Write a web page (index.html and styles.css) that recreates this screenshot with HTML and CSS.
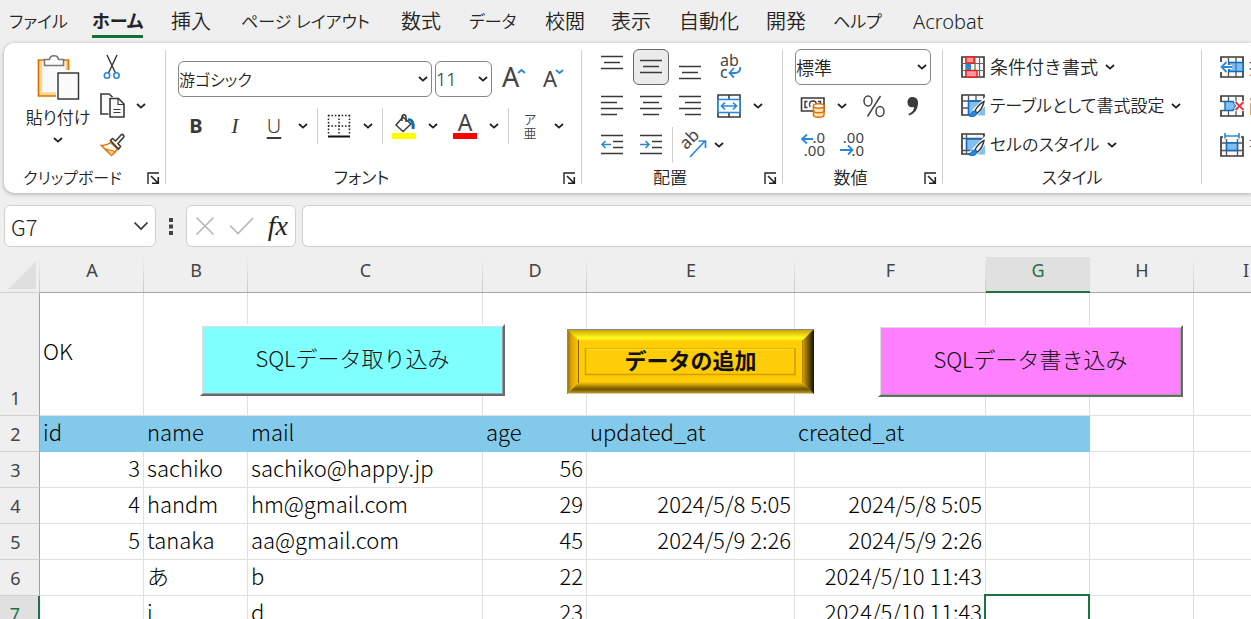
FILE: index.html
```html
<!DOCTYPE html>
<html lang="ja">
<head>
<meta charset="utf-8">
<title>Excel</title>
<link rel="stylesheet" href="styles.css">
</head>
<body>
<svg class="defs" aria-hidden="true">
  <symbol id="chev" viewBox="0 0 10 6"><path d="M1 1l4 3.6L9 1" fill="none" stroke="#222" stroke-width="1.8"/></symbol>
  <symbol id="launch" viewBox="0 0 13 13"><path d="M1 12V1h11" fill="none" stroke="#222" stroke-width="1.4"/><path d="M4 4l7 7M11.3 5v6.3H5" fill="none" stroke="#222" stroke-width="1.6"/></symbol>
  <symbol id="brush" viewBox="0 0 24 24"><path d="M10 24L24 6v18z" fill="#fff"/><path d="M23 7L14 16l3 3 6-9z" fill="#fff" stroke="#fff" stroke-width="4"/><path d="M16.500 21.500H24V12z" fill="#83beec"/><path d="M23 7.500c-3 1-7.500 6-9 9.500l2.500 2C19 17 22 12.500 23 7.500z" fill="#fff" stroke="#3b3a39" stroke-width="1.500"/><path d="M13.500 17c-3 0-2.500 3.500-6.500 4.200 2.500 2.300 8.500 1.800 9.200-2z" fill="#2b88d8" stroke="#0f6cbd" stroke-width="1"/></symbol>
</svg>

<nav class="tabs">
  <button class="tab kana">ファイル</button>
  <button class="tab kana active">ホーム</button>
  <button class="tab">挿入</button>
  <button class="tab kana">ページ レイアウト</button>
  <button class="tab">数式</button>
  <button class="tab kana">データ</button>
  <button class="tab">校閲</button>
  <button class="tab">表示</button>
  <button class="tab">自動化</button>
  <button class="tab">開発</button>
  <button class="tab kana">ヘルプ</button>
  <button class="tab">Acrobat</button>
</nav>

<section class="ribbon">
  <div class="group clipboard">
    <div class="body side">
      <button class="paste">
        <svg width="44" height="48" viewBox="0 0 44 48"><path d="M3 5h30v36H3z" fill="#fafafa"/><path d="M4.500 6v33H22M31 6v12" fill="none" stroke="#f8d890" stroke-width="3.500"/><path d="M10 5H2.500v36H21M26 5h6.500v12" fill="none" stroke="#e07000" stroke-width="1.700"/><path d="M8.500 10.500V4.500h5c.5-5 8.500-5 9 0h5v6z" fill="#fff" stroke="#777" stroke-width="1.600"/><path d="M20 15h24v33H20z" fill="#fff"/><path d="M22 18h20.500v26H22z" fill="#fafafa" stroke="#3b3a39" stroke-width="1.500"/></svg>
        <span>貼り付け</span>
        <svg width="10" height="6"><use href="#chev"/></svg>
      </button>
      <div class="stack">
        <div class="row"><button class="tool" aria-label="切り取り"><svg width="20" height="26" viewBox="0 0 20 26"><path d="M5 1l8.500 18M15 1L6.500 19" fill="none" stroke="#3b3a39" stroke-width="1.500"/><circle cx="5" cy="21.500" r="2.700" fill="#fff" stroke="#2b88d8" stroke-width="1.600"/><circle cx="14.500" cy="21.500" r="2.700" fill="#fff" stroke="#2b88d8" stroke-width="1.600"/></svg></button></div>
        <div class="row"><button class="tool" aria-label="コピー"><svg width="25" height="25" viewBox="0 0 25 25"><path d="M8.500 21H1V1h8l3.500 3" fill="#fafafa" stroke="#3b3a39" stroke-width="1.600"/><path d="M10 5.500h8.500L24 11v13H10z" fill="#fafafa" stroke="#3b3a39" stroke-width="1.600"/><path d="M18 6v5.500h6M13.500 16.500h7M13.500 19.500h7" fill="none" stroke="#3b3a39" stroke-width="1.200"/></svg></button><button class="drop" aria-label="コピー オプション"><svg width="10" height="6"><use href="#chev"/></svg></button></div>
        <div class="row"><button class="tool" aria-label="書式のコピー"><svg width="25" height="24" viewBox="0 0 25 24"><path d="M1.500 12.500c4 .3 6.500-1 9-3l7 6.500c-1.500 2-3.500 4.500-6 6.500z" fill="#fff" stroke="#e07000" stroke-width="1.600"/><path d="M6 16l9 2.500-3.500 4z" fill="#f8d078" stroke="#e07000" stroke-width="1"/><path d="M10.500 7.500l2-2 3 2.500 5.500-6c1.500-1.500 4 .8 2.500 2.500L18 10.500l2.500 3-2 2.500z" fill="#fff" stroke="#3b3a39" stroke-width="1.600"/></svg></button></div>
      </div>
    </div>
    <div class="foot"><span>クリップボード</span><button class="launcher" aria-label="クリップボードの設定"><svg width="13" height="13"><use href="#launch"/></svg></button></div>
  </div>
  <i class="divider"></i>

  <div class="group font">
    <div class="body two">
      <div class="row">
        <label class="combo face"><select aria-label="フォント"><option>游ゴシック</option></select><svg width="10" height="6"><use href="#chev"/></svg></label>
        <label class="combo size"><select aria-label="フォント サイズ"><option>11</option></select><svg width="10" height="6"><use href="#chev"/></svg></label>
        <button class="tool" aria-label="拡大"><svg width="26" height="26" viewBox="0 0 26 26"><text x="2" y="21" font-size="27" class="gl">A</text><path d="M18 7l3.500-3 3.500 3" fill="none" stroke="#2b88d8" stroke-width="1.800"/></svg></button>
        <button class="tool" aria-label="縮小"><svg width="26" height="26" viewBox="0 0 26 26"><text x="4" y="21" font-size="22" class="gl">A</text><path d="M17 4l3.500 3L24 4" fill="none" stroke="#2b88d8" stroke-width="1.800"/></svg></button>
      </div>
      <div class="row">
        <button class="tool bold">B</button>
        <button class="tool italic">I</button>
        <div class="split"><button class="tool under">U</button><button class="drop" aria-label="下線"><svg width="10" height="6"><use href="#chev"/></svg></button></div>
        <i class="bar"></i>
        <div class="split"><button class="tool" aria-label="罫線"><svg width="24" height="24" viewBox="0 0 24 24"><path d="M1 1.500h22M1 12h22" stroke="#222" stroke-width="1.500" stroke-dasharray="1.600 1.800"/><path d="M1.500 1v19M12 1v19M22.500 1v19" stroke="#222" stroke-width="1.500" stroke-dasharray="1.600 1.800"/><path d="M1 22.500h22" stroke="#111" stroke-width="2"/></svg></button><button class="drop" aria-label="罫線の種類"><svg width="10" height="6"><use href="#chev"/></svg></button></div>
        <i class="bar"></i>
        <div class="split"><button class="tool" aria-label="塗りつぶし"><svg width="26" height="26" viewBox="0 0 26 26"><path d="M1 20h24v6H1z" fill="#ff0"/><path d="M12 4l8 7-8 7.500-7-6.500z" fill="#fff" stroke="#3b3a39" stroke-width="1.500"/><path d="M11 8V4c0-3 4-3 4 0v5" fill="none" stroke="#3b3a39" stroke-width="1.500"/><path d="M17 7c4-1 6 3 5 9" fill="none" stroke="#0f6cbd" stroke-width="3"/></svg></button><button class="drop" aria-label="塗りつぶしの色"><svg width="10" height="6"><use href="#chev"/></svg></button></div>
        <div class="split"><button class="tool" aria-label="文字色"><svg width="26" height="26" viewBox="0 0 26 26"><text x="13" y="18" text-anchor="middle" font-size="23" class="gl">A</text><path d="M1 20h24v6H1z" fill="#f00"/></svg></button><button class="drop" aria-label="フォントの色"><svg width="10" height="6"><use href="#chev"/></svg></button></div>
        <i class="bar"></i>
        <div class="split"><button class="tool ruby"><span>ア</span><span>亜</span></button><button class="drop" aria-label="ふりがな"><svg width="10" height="6"><use href="#chev"/></svg></button></div>
      </div>
    </div>
    <div class="foot"><span>フォント</span><button class="launcher" aria-label="フォントの設定"><svg width="13" height="13"><use href="#launch"/></svg></button></div>
  </div>
  <i class="divider"></i>

  <div class="group align">
    <div class="body">
      <div class="row">
        <button class="tool" aria-label="上揃え"><svg class="ln" width="22" height="26" viewBox="0 0 22 26"><path d="M0 2.500h22M3 8.500h16M0 14.500h22"/></svg></button>
        <button class="tool on" aria-label="上下中央揃え"><svg class="ln" width="22" height="26" viewBox="0 0 22 26"><path d="M0 6.500h22M3 12.500h16M0 18.500h22"/></svg></button>
        <button class="tool" aria-label="下揃え"><svg class="ln" width="22" height="26" viewBox="0 0 22 26"><path d="M0 12.500h22M3 18.500h16M0 24.500h22"/></svg></button>
        <button class="tool" aria-label="折り返し"><svg width="24" height="26" viewBox="0 0 24 26"><text x="3" y="12" font-size="16" class="gl">ab</text><text x="3" y="24" font-size="16" class="gl">c</text><path d="M23 13c1 4-2 6-5 6h-5m4-5L12.500 19l4.500 4.500" fill="none" stroke="#2b88d8" stroke-width="1.800"/></svg></button>
      </div>
      <div class="row">
        <button class="tool" aria-label="左揃え"><svg class="ln" width="22" height="22" viewBox="0 0 22 22"><path d="M0 1.500h22M0 7.500h16M0 13.500h22M0 19.500h16"/></svg></button>
        <button class="tool" aria-label="中央揃え"><svg class="ln" width="22" height="22" viewBox="0 0 22 22"><path d="M0 1.500h22M3 7.500h16M0 13.500h22M3 19.500h16"/></svg></button>
        <button class="tool" aria-label="右揃え"><svg class="ln" width="22" height="22" viewBox="0 0 22 22"><path d="M0 1.500h22M6 7.500h16M0 13.500h22M6 19.500h16"/></svg></button>
        <div class="split"><button class="tool" aria-label="セルを結合"><svg width="24" height="24" viewBox="0 0 24 24"><path d="M1 1h22v22H1zM12 1v22" fill="#fafafa" stroke="#3b3a39" stroke-width="1.600"/><path d="M1 5.500h22v13H1z" fill="#fff" stroke="#2b88d8" stroke-width="1.700"/><path d="M4.500 12h15M8 8.500L4.500 12 8 15.500M16 8.500l3.500 3.500-3.500 3.500" fill="none" stroke="#2b88d8" stroke-width="1.700"/></svg></button><button class="drop" aria-label="結合の種類"><svg width="10" height="6"><use href="#chev"/></svg></button></div>
      </div>
      <div class="row">
        <button class="tool" aria-label="インデントを減らす"><svg class="ln" width="22" height="22" viewBox="0 0 22 22"><path d="M0 1.500h22M12 7.500h10M12 13.500h10M0 19.500h22"/><path class="blue" d="M10 10.500H1M4.500 7L1 10.500 4.500 14"/></svg></button>
        <button class="tool" aria-label="インデントを増やす"><svg class="ln" width="22" height="22" viewBox="0 0 22 22"><path d="M0 1.500h22M12 7.500h10M12 13.500h10M0 19.500h22"/><path class="blue" d="M0 10.500h9M5.500 7L9 10.500 5.500 14"/></svg></button>
        <i class="bar"></i>
        <div class="split tight"><button class="tool" aria-label="方向"><svg width="26" height="26" viewBox="0 0 26 26"><text transform="rotate(-45 6 19)" x="6" y="18" font-size="17" class="gl">ab</text><path d="M9 25L24 9M17.500 9H24.500v7" fill="none" stroke="#2b88d8" stroke-width="1.700"/></svg></button><button class="drop" aria-label="文字の方向"><svg width="10" height="6"><use href="#chev"/></svg></button></div>
      </div>
    </div>
    <div class="foot"><span>配置</span><button class="launcher" aria-label="配置の設定"><svg width="13" height="13"><use href="#launch"/></svg></button></div>
  </div>
  <i class="divider"></i>

  <div class="group number">
    <div class="body">
      <div class="row"><label class="combo format"><select aria-label="数値の書式"><option>標準</option></select><svg width="10" height="6"><use href="#chev"/></svg></label></div>
      <div class="row">
        <div class="split"><button class="tool" aria-label="通貨"><svg width="26" height="24" viewBox="0 0 26 24"><path d="M1.500 4h22.500v13H1.500z" fill="#fafafa" stroke="#3b3a39" stroke-width="1.600"/><path d="M7.500 7.500H5v6h2.500M18 7.500h2.500v3M10 13c-1.500-4 0-6 3-6s3.500 2 3 3" fill="none" stroke="#3b3a39" stroke-width="1.400"/><path d="M13.500 12v9c0 3 10.500 3 10.500 0v-9z" fill="#ffe2b8" stroke="#e07000" stroke-width="1.500"/><ellipse cx="18.700" cy="12" rx="5.300" ry="2.200" fill="#fff" stroke="#e07000" stroke-width="1.500"/><path d="M13.500 16.500c0 3 10.500 3 10.500 0" fill="none" stroke="#e07000" stroke-width="1.500"/></svg></button><button class="drop" aria-label="通貨の種類"><svg width="10" height="6"><use href="#chev"/></svg></button></div>
        <button class="tool" aria-label="パーセント"><svg width="24" height="24" viewBox="0 0 24 24"><g fill="none" stroke="#444" stroke-width="1.500"><ellipse cx="6" cy="7" rx="4" ry="5"/><ellipse cx="18" cy="17.500" rx="4" ry="5"/><path d="M18.500 2L5.500 22.500"/></g></svg></button>
        <button class="tool" aria-label="桁区切り"><svg width="14" height="22" viewBox="0 0 14 22"><path d="M6.500 2c4 0 6 3 5.500 7-.5 6-4 10-9 11.500l-.5-1.500c4-2 5.500-4 5.500-7-4 1-6.500-1-6.500-4.500C1.500 4 3.500 2 6.500 2z" fill="#3b3a39"/></svg></button>
      </div>
      <div class="row">
        <button class="tool" aria-label="小数点以下の桁数を増やす"><svg width="24" height="26" viewBox="0 0 24 26"><text x="24" y="11" text-anchor="end" font-size="15" class="gl">.0</text><text x="24" y="24" text-anchor="end" font-size="15" class="gl">.00</text><path d="M12 7H1M6 2.500L1 7l5 4.500" fill="none" stroke="#2b88d8" stroke-width="1.800"/></svg></button>
        <button class="tool" aria-label="小数点以下の桁数を減らす"><svg width="24" height="26" viewBox="0 0 24 26"><text x="24" y="11" text-anchor="end" font-size="15" class="gl">.00</text><text x="24" y="24" text-anchor="end" font-size="15" class="gl">.0</text><path d="M0 18h12M8 13.500l4.500 4.500L8 22.500" fill="none" stroke="#2b88d8" stroke-width="1.800"/></svg></button>
      </div>
    </div>
    <div class="foot"><span>数値</span><button class="launcher" aria-label="数値の設定"><svg width="13" height="13"><use href="#launch"/></svg></button></div>
  </div>
  <i class="divider"></i>

  <div class="group styles">
    <div class="body">
      <button class="wide"><svg width="24" height="22" viewBox="0 0 24 22"><path d="M1 1h22v20H1z" fill="#fafafa" stroke="#3b3a39" stroke-width="1.700"/><path d="M5 1v20M14 1v20M18.500 1v20M1 7.500h22M1 14.500h22" stroke="#666" stroke-width="1.200"/><path d="M5 8h7v6H5z" fill="#fff"/><path d="M5 8h5v6H5z" fill="#2b88d8"/><path d="M5 1h8v6H5zM5 14.500h11V21H5z" fill="#ff9ba0" stroke="#e8221b" stroke-width="1.500"/></svg><span>条件付き書式</span><svg width="10" height="6"><use href="#chev"/></svg></button>
      <button class="wide"><svg width="24" height="24" viewBox="0 0 24 24"><path d="M1 1h22v20H1z" fill="#fafafa" stroke="#3b3a39" stroke-width="1.700"/><path d="M7.500 7H23v14H7.500z" fill="#83beec"/><path d="M7.500 1v20M15 1v6M1 7h22M1 14h6" stroke="#555" stroke-width="1.300"/><path d="M7.500 21V7H23" fill="none" stroke="#0f6cbd" stroke-width="1.300"/><use href="#brush"/></svg><span class="kana">テーブルとして書式設定</span><svg width="10" height="6"><use href="#chev"/></svg></button>
      <button class="wide"><svg width="24" height="24" viewBox="0 0 24 24"><path d="M1 1h22v20H1z" fill="#fafafa" stroke="#3b3a39" stroke-width="1.700"/><path d="M5.500 6H21v12H5.500z" fill="#83beec"/><path d="M5.500 1v20M1 5.500h22M1 17.500h8" stroke="#555" stroke-width="1.300"/><path d="M5.500 17.500V6H21" fill="none" stroke="#0f6cbd" stroke-width="1.300"/><use href="#brush"/></svg><span class="kana">セルのスタイル</span><svg width="10" height="6"><use href="#chev"/></svg></button>
    </div>
    <div class="foot"><span>スタイル</span></div>
  </div>
  <i class="divider"></i>

  <div class="group cells">
    <div class="body">
      <button class="wide"><svg width="24" height="22" viewBox="0 0 24 22"><path d="M1 1h22v20H1z" fill="#fafafa" stroke="#3b3a39" stroke-width="1.700"/><path d="M8.500 1v20M16 1v20" stroke="#555" stroke-width="1.300"/><path d="M0 6h8v10H0z" fill="#fff"/><path d="M9 6.500h14v9H9z" fill="#83beec" stroke="#0f6cbd" stroke-width="1.400"/><path d="M16 6v10" stroke="#0f6cbd"/><path d="M12 11H1.500M6.500 6L1.500 11l5 5" fill="none" stroke="#fff" stroke-width="4"/><path d="M12 11H1.500M6.500 6L1.500 11l5 5" fill="none" stroke="#2b88d8" stroke-width="1.800"/></svg><span>挿入</span></button>
      <button class="wide"><svg width="24" height="22" viewBox="0 0 24 22"><path d="M1 7V1h22v5M1 15v6h22v-5" fill="none" stroke="#3b3a39" stroke-width="1.700"/><path d="M8.500 1v6M16 1v5M8.500 15v6M16 16v5M1 6.500h4M1 15.500h4" stroke="#555" stroke-width="1.300"/><path d="M5 6.500h8l3 4.500-3 4.500H5z" fill="#83beec" stroke="#0f6cbd" stroke-width="1.400"/><path d="M15.500 7l8 8M23.500 7l-8 8" stroke="#fff" stroke-width="4"/><path d="M15.500 7l8 8M23.500 7l-8 8" stroke="#e8343b" stroke-width="1.800"/></svg><span>削除</span></button>
      <button class="wide"><svg width="24" height="24" viewBox="0 0 24 24"><path d="M3 4H1v19h22V4h-2" fill="#fafafa" stroke="#3b3a39" stroke-width="1.700"/><path d="M6.500 6v17M17.500 6v17M1 10h22M1 17.500h22" stroke="#555" stroke-width="1.300"/><path d="M6.500 10h11v7.500h-11z" fill="#83beec" stroke="#0f6cbd" stroke-width="1.500"/><path d="M5 3h14M5 0v5.500M19 0v5.500" fill="none" stroke="#2b88d8" stroke-width="1.600"/></svg><span>書式</span></button>
    </div>
  </div>
</section>

<section class="formula">
  <div class="box name"><input type="text" value="G7" aria-label="名前ボックス"><svg width="16" height="10" viewBox="0 0 16 10"><path d="M1.500 1.500L8 8l6.500-6.500" fill="none" stroke="#333" stroke-width="1.700"/></svg></div>
  <svg class="grip" width="4" height="17" viewBox="0 0 4 17"><path d="M0 0h4v4H0zM0 6.500h4v4H0zM0 13h4v4H0z" fill="#444"/></svg>
  <div class="box actions">
    <button aria-label="キャンセル"><svg width="20" height="20" viewBox="0 0 20 20"><path d="M1.500 1.500l17 17M18.500 1.500l-17 17" stroke="#b5b5b5" stroke-width="1.600"/></svg></button>
    <button aria-label="入力"><svg width="25" height="20" viewBox="0 0 25 20"><path d="M1 9.500l8 8L24 2" fill="none" stroke="#b5b5b5" stroke-width="1.600"/></svg></button>
    <button class="fx">fx</button>
  </div>
  <div class="box entry"><input type="text" aria-label="数式バー"></div>
</section>

<main class="sheet">
  <table>
    <colgroup><col class="c-head"><col class="c-std"><col class="c-std"><col class="c-mail"><col class="c-std"><col class="c-upd"><col class="c-cre"><col class="c-std"><col class="c-std"><col class="c-std"><col></colgroup>
    <thead>
      <tr><th class="corner"><svg width="28" height="28" viewBox="0 0 28 28"><path d="M28 0v28H0z" fill="#dfdfdf"/></svg></th><th>A</th><th>B</th><th>C</th><th>D</th><th>E</th><th>F</th><th class="sel">G</th><th>H</th><th>I</th><th></th></tr>
    </thead>
    <tbody>
      <tr class="tall"><th>1</th><td>OK</td><td></td><td></td><td></td><td></td><td></td><td></td><td></td><td></td><td></td></tr>
      <tr class="titles"><th>2</th><td>id</td><td>name</td><td>mail</td><td>age</td><td>updated_at</td><td>created_at</td><td></td><td class="plain"></td><td class="plain"></td><td class="plain"></td></tr>
      <tr><th>3</th><td class="num">3</td><td>sachiko</td><td>sachiko@happy.jp</td><td class="num">56</td><td></td><td></td><td></td><td></td><td></td><td></td></tr>
      <tr><th>4</th><td class="num">4</td><td>handm</td><td>hm@gmail.com</td><td class="num">29</td><td class="num">2024/5/8 5:05</td><td class="num">2024/5/8 5:05</td><td></td><td></td><td></td><td></td></tr>
      <tr><th>5</th><td class="num">5</td><td>tanaka</td><td>aa@gmail.com</td><td class="num">45</td><td class="num">2024/5/9 2:26</td><td class="num">2024/5/9 2:26</td><td></td><td></td><td></td><td></td></tr>
      <tr><th>6</th><td></td><td>あ</td><td>b</td><td class="num">22</td><td></td><td class="num">2024/5/10 11:43</td><td></td><td></td><td></td><td></td></tr>
      <tr><th class="sel">7</th><td></td><td>i</td><td>d</td><td class="num">23</td><td></td><td class="num">2024/5/10 11:43</td><td class="cursor"></td><td></td><td></td><td></td></tr>
    </tbody>
  </table>
  <button class="macro import">SQLデータ取り込み</button>
  <button class="gold">
    <svg viewBox="0 0 247 65" preserveAspectRatio="none">
      <defs>
        <linearGradient id="gt" x2="0" y2="1"><stop offset="0" stop-color="#c89800"/><stop offset=".75" stop-color="#ffff20"/><stop offset="1" stop-color="#ffd010"/></linearGradient>
        <linearGradient id="gb" x2="0" y2="1"><stop offset="0" stop-color="#ffcc08"/><stop offset=".6" stop-color="#6e5200"/><stop offset="1" stop-color="#d9a800"/></linearGradient>
        <linearGradient id="gl"><stop offset="0" stop-color="#8a6a10"/><stop offset=".4" stop-color="#e0a800"/><stop offset="1" stop-color="#ffc800"/></linearGradient>
        <linearGradient id="gr"><stop offset="0" stop-color="#e0ac00"/><stop offset=".5" stop-color="#7a5c08"/><stop offset="1" stop-color="#111"/></linearGradient>
      </defs>
      <path d="M0 0h247v65H0z" fill="#ffcc08"/>
      <path d="M0 0h247l-12 12H12z" fill="url(#gt)"/>
      <path d="M0 65h247l-12-12H12z" fill="url(#gb)"/>
      <path d="M0 0l12 12v41L0 65z" fill="url(#gl)"/>
      <path d="M247 0l-12 12v41l12 12z" fill="url(#gr)"/>
      <path d="M11.500 11v43" stroke="#806000"/>
      <path d="M235.500 11v43" stroke="#b08800"/>
      <path d="M0 .5h247M.5 0v65" stroke="#888"/><path d="M1 64.500h245" stroke="#ccc"/>
      <path d="M18.500 19v26.500H228V19" fill="none" stroke="#d09c00" stroke-width="1.500"/><path d="M19 19.500h209" stroke="#e4b400"/><path d="M20 20.500h207" stroke="#ffe030"/>
    </svg>
    <span>データの追加</span>
  </button>
  <button class="macro export">SQLデータ書き込み</button>
</main>
</body>
</html>
```
FILE: styles.css
```css
* { box-sizing: border-box; }
html, body { height: 100%; }
body {
  margin: 0;
  overflow: hidden;
  background: #efefef;
  color: #242424;
  font-family: "Noto Sans CJK JP", sans-serif;
  font-size: 18px;
  font-weight: 350;
}
button, input, select {
  font: inherit;
  color: inherit;
  padding: 0;
  margin: 0;
  border: 0;
  background: none;
}
svg { display: block; flex: none; overflow: visible; }
.defs { position: absolute; width: 0; height: 0; }
.gl { font-family: "Noto Sans", sans-serif; font-weight: 400; fill: #444; }

/* tabs */
.tabs {
  display: grid;
  grid-template-columns: 83px 79px 70px 160px 68px 76px 66px 68px 87px 67px 80px max-content;
  justify-items: start;
  height: 43px;
  padding-left: 9px;
}
.tab {
  height: 38px;
  padding-top: 8px;
  border-bottom: 3px solid transparent;
  font-family: "Noto Sans", "Noto Sans CJK JP", sans-serif;
  font-size: 20px;
  line-height: 27px;
  white-space: nowrap;
}
.tab.kana { font-size: 17px; }
.kana { font-feature-settings: "palt"; }
.tab.active { font-size: 18px; font-weight: 700; border-color: #0f703b; }

/* ribbon */
.ribbon {
  display: flex;
  height: 150px;
  margin-left: 4px;
  border-radius: 10px 0 0 10px;
  background: #fff;
  box-shadow: 0 1px 4px rgba(0, 0, 0, .3);
}
.divider { flex: none; width: 1px; margin: 7px 0 9px; background: #d1d1d1; }
.group { display: flex; flex-direction: column; flex: none; padding-top: 4px; }
.clipboard { width: 161px; }
.font { width: 415px; }
.align { width: 200px; }
.number { width: 159px; }
.styles { width: 258px; }
.body { display: flex; flex-direction: column; height: 117px; padding-left: 12px; }
.styles .body, .cells .body, .clipboard .body { padding-left: 18px; }
.side { flex-direction: row; }
.row { display: flex; align-items: center; gap: 3px; height: 39px; }
.two { padding-top: 8px; }
.two .row { height: 47px; }
.stack .row { gap: 0; }
.foot { display: flex; align-items: center; height: 26px; font-size: 17px; line-height: 24px; font-feature-settings: "palt"; }
.clipboard .foot { font-size: 16px; }
.foot span { flex: 1; text-align: center; }
.launcher { width: 24px; padding-top: 2px; display: grid; place-items: center; }

.tool { width: 36px; height: 36px; display: grid; place-items: center; flex: none; border-radius: 6px; }
.tool.on { border: 1px solid #666; background: #ebebeb; }
.drop { width: 22px; height: 36px; display: grid; place-items: center; }
.split { display: flex; }
.tight .drop { width: 14px; }
.bar { width: 1px; height: 36px; background: #d1d1d1; }
.ln { fill: none; stroke: #3b3a39; stroke-width: 1.6; }
.ln .blue { stroke: #2b88d8; }

.paste { display: flex; flex-direction: column; align-items: center; width: 72px; padding-top: 8px; font-size: 17px; line-height: 28px; font-feature-settings: "palt"; }
.paste span { margin-bottom: 6px; }
.bold, .italic, .under { font-family: "Noto Sans", sans-serif; font-size: 20px; color: #3b3a39; }
.bold { font-weight: 700; }
.italic { font-family: "Liberation Serif", serif; font-style: italic; font-size: 22px; }
.under { text-decoration: underline; text-underline-offset: 4px; text-decoration-thickness: 2px; }
.ruby { font-size: 13px; line-height: 14px; align-content: center; color: #444; }

.combo { position: relative; height: 36px; border: 1px solid #868686; border-radius: 6px; background: #fff; }
.combo select { width: 100%; height: 100%; padding-left: 0; appearance: none; font-feature-settings: "palt"; }
.combo svg { position: absolute; right: 3px; top: 14px; pointer-events: none; }
.face { width: 254px; }
.face select { font-size: 16px; }
.size { width: 57px; }
.size select { font-family: "Noto Sans", sans-serif; }
.format { width: 136px; }

.wide { display: flex; align-items: center; height: 39px; gap: 5px; line-height: 24px; white-space: nowrap; }
.wide span { padding-bottom: 2px; font-size: 18px; }
.wide span + svg { margin-left: 2px; }
.wide .kana { font-size: 17px; }

/* formula bar */
.formula { display: flex; align-items: center; height: 42px; margin: 12px 0 10px 4px; }
.box { display: flex; align-items: center; height: 42px; border: 1px solid #d0d0d0; border-radius: 6px; background: #fff; }
.box input { flex: 1; min-width: 0; height: 100%; outline: 0; font-size: 22px; font-weight: 300; }
.name { width: 152px; padding: 0 6px; }
.grip { margin: 0 13px; }
.actions { width: 110px; justify-content: space-between; padding: 0 7px 0 8px; }
.fx { font-family: "Liberation Serif", serif; font-style: italic; font-size: 28px; line-height: 32px; color: #222; }
.entry { flex: 1; margin-left: 6px; border-right: 0; border-radius: 6px 0 0 6px; }

/* sheet */
.sheet { position: relative; }
table { width: 100%; table-layout: fixed; border-collapse: separate; border-spacing: 0; }
.c-head { width: 40px; }
.c-std { width: 104px; }
.c-mail { width: 235px; }
.c-upd { width: 208px; }
.c-cre { width: 191px; }
th { padding: 0; font-family: "Noto Sans", sans-serif; font-weight: 400; font-size: 18px; color: #444; }
thead th {
  height: 36px;
  padding-bottom: 10px;
  line-height: 24px;
  border-bottom: 1px solid #a6a6a6;
  background: linear-gradient(#efefef, #c8c8c8) right / 1px 100% no-repeat;
}
thead .corner { padding: 4px 0 3px 8px; border-color: #d0d0d0; }
thead .sel { padding-bottom: 9px; background: #e0e0e0; color: #1a7343; border-bottom: 2px solid #1a7343; }
tbody th {
  padding-right: 8px;
  vertical-align: bottom;
  line-height: 33px;
  border-right: 1px solid #a0a0a0;
  border-bottom: 1px solid #d0d0d0;
}
tbody .sel { background: #e0e0e0; color: #1a7343; border-right: 2px solid #1a7343; }
td {
  height: 36px;
  padding: 0 3px 4px;
  border-right: 1px solid #e0e0e0;
  border-bottom: 1px solid #e0e0e0;
  background: #fff;
  color: #000;
  font-size: 22px;
  font-weight: 300;
  line-height: 31px;
  white-space: nowrap;
}
.num { text-align: right; }
.tall td { height: 123px; padding-bottom: 8px; }
.titles td:not(.plain) { background: #83caea; border-color: #83caea; }
.cursor { position: relative; }
.cursor::after { content: ""; position: absolute; inset: -2px -1px -2px -2px; border: 2px solid #1a7343; }

.macro {
  position: absolute;
  width: 305px;
  height: 72px;
  padding-bottom: 6px;
  border: 2px solid;
  border-color: #fff #696969 #696969 #fff;
  box-shadow: inset 1px 1px #dedede, inset -1px -1px #a0a0a0;
  color: #111;
  font-size: 22px;
  font-weight: 300;
}
.import { left: 200px; top: 67px; background: #80ffff; }
.export { left: 878px; top: 68px; background: #ff80ff; }
.gold { position: absolute; left: 567px; top: 72px; width: 247px; height: 65px; padding-bottom: 6px; color: #111; font-size: 22px; font-weight: 700; }
.gold svg { position: absolute; inset: 0; width: 100%; height: 100%; }
.gold span { position: relative; }
```
